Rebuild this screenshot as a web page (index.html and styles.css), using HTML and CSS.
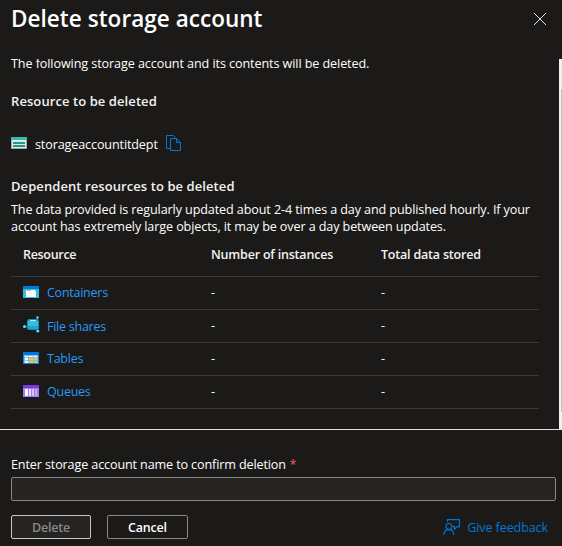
FILE: index.html
```
<!DOCTYPE html>
<html lang="en">
<head>
<meta charset="utf-8">
<title>Delete storage account</title>
<link rel="stylesheet" href="styles.css">
</head>
<body>
<div class="panel">
  <header class="header">
    <h1>Delete storage account</h1>
    <svg class="close" width="14" height="14" viewBox="0 0 14 14"><path d="M1 1l12 12M13 1L1 13" stroke="#e4e4e4" stroke-width="1" fill="none"/></svg>
  </header>
  <main class="content">
    <div class="body">
      <p class="intro">The following storage account and its contents will be deleted.</p>
      <h2 class="h-resource">Resource to be deleted</h2>
      <div class="account">
        <svg class="storage" width="16" height="12" viewBox="0 0 16 12"><path fill="#e6e6e6" d="M0 0h16v12H0z"/><path fill="#a5a5a5" d="M0 3h1v8h14V3h1v9H0z"/><path fill="#32bea6" d="M0 0h16v3H0z"/><path fill="#1e9b91" d="M2 5h12v2H2zM2 8h12v2H2z"/></svg>
        <span class="account-name">storageaccountitdept</span>
        <svg class="copy" width="16" height="17" viewBox="0 0 16 17" fill="none" stroke="#0078d4"><path d="M4.500 13.500h-4V.500h7l2 2M4.500 3.500h6l4 4v8h-10zM10.500 3.500v4h4"/></svg>
      </div>
      <h2 class="h-dependent">Dependent resources to be deleted</h2>
      <p class="note">The data provided is regularly updated about 2-4 times a day and published hourly. If your<br>account has extremely large objects, it may be over a day between updates.</p>
      <div class="table">
        <div class="row head"><span class="th-resource">Resource</span><span>Number of instances</span><span>Total data stored</span></div>
        <div class="row"><span class="res"><svg class="icon" width="16" height="12" viewBox="0 0 16 12"><path fill="#32bedd" d="M0 0h16v12H0z"/><path fill="#0078d4" d="M0 0h16v3H0z"/><path fill="#fff" d="M4 4h8v1h1v6H3V5z"/><path fill="#f6a45b" d="M4 4h4v1H4z"/></svg><a>Containers</a></span><span>-</span><span>-</span></div>
        <div class="row"><span class="res files"><svg class="share" width="17" height="17" viewBox="0 0 17 17"><path d="M14.500 1v4M1 10.500h4M14.500 11v4" stroke="#198ab3"/><rect x="4" y="3" width="12" height="11" rx="2" fill="#198ab3"/><path fill="#32bedd" d="M5 5h10v6H5z"/><path fill="#20a3c9" d="M5 10h10v3H5z"/><path fill="#b9eefa" d="M7 4h6v1H7z"/><g fill="#50e6ff"><circle cx="14.500" cy="1.500" r="1.200"/><circle cx="1.500" cy="10.500" r="1.500"/><circle cx="14.800" cy="15.200" r="1.400"/></g></svg><a>File shares</a></span><span>-</span><span>-</span></div>
        <div class="row"><span class="res"><svg class="icon" width="16" height="12" viewBox="0 0 16 12"><path fill="#1586d3" d="M0 0h16v12H0z"/><path fill="#0078d4" d="M0 0h16v3H0z"/><path fill="#83b9f9" d="M1 3h14v8H1z"/><path fill="#fff" d="M2 4h3v1H2zM6 4h4v1H6zM11 4h3v1h-3zM2 6h3v2H2zM2 9h3v2H2z"/><path fill="#f2cb1d" d="M6 6h4v2H6zM11 6h3v2h-3zM6 9h4v2H6zM11 9h3v2h-3z"/></svg><a>Tables</a></span><span>-</span><span>-</span></div>
        <div class="row"><span class="res"><svg class="icon" width="16" height="12" viewBox="0 0 16 12"><path fill="#a67af4" d="M0 0h16v12H0z"/><path fill="#773adc" d="M0 0h16v3H0z"/><path fill="#fff" d="M2 4h3v7H2z"/><path fill="#e9dcfd" d="M6 4h2v7H6z"/><path fill="#d7c1f9" d="M9 4h2v7H9z"/><path fill="#c5a7f5" d="M12 4h2v7h-2z"/></svg><a>Queues</a></span><span>-</span><span>-</span></div>
      </div>
    </div>
    <div class="scrollbar"><div class="thumb"></div></div>
  </main>
  <footer class="footer">
    <label for="confirm"><span>Enter storage account name to confirm deletion</span><span class="required">*</span></label>
    <input id="confirm" type="text">
    <div class="actions">
      <button class="delete" disabled>Delete</button>
      <button class="cancel">Cancel</button>
      <a class="feedback"><svg width="17" height="17" viewBox="0 0 17 17" fill="none" stroke="#0078d4" stroke-width="1.100"><path d="M4.500 3V.600h12v7h-2.300l-2.700 2.700V7.600H10"/><circle cx="6" cy="7.500" r="3"/><path d="M.600 16c.300-3.500 2.400-5.400 5.200-5.400s4.800 2 5.100 5.400"/></svg><span>Give feedback</span></a>
    </div>
  </footer>
</div>
</body>
</html>
```
FILE: styles.css
```
* { box-sizing: border-box; }
body {
  margin: 0;
  background: #1b1a19;
  color: #fff;
  font: 12.6px/17px "Open Sans", "Noto Sans", sans-serif;
  letter-spacing: -0.13px;
  white-space: nowrap;
}
h1, h2, p { margin: 0; }
.panel { width: 562px; height: 546px; display: flex; flex-direction: column; overflow: hidden; }
.header { height: 59px; flex: none; display: flex; justify-content: space-between; padding: 4px 15px 0 11px; }
h1 { font-size: 22.500px; line-height: 30px; font-weight: 600; letter-spacing: 0.04px; }
.close { margin-top: 8px; }
.content { height: 370px; flex: none; display: flex; justify-content: space-between; overflow: hidden; }
.body { width: 539px; padding-left: 11px; margin-top: -4px; }
.intro { letter-spacing: -0.09px; }
h2 { font-size: 13px; line-height: 17px; font-weight: 600; color: #f3f2f1; letter-spacing: 0.08px; }
.h-resource { margin-top: 21px; }
.account { display: flex; align-items: center; height: 20px; margin-top: 24px; }
.storage { position: relative; top: -1px; }
.account-name { margin-left: 8px; }
.copy { margin: -1px 0 0 8px; }
.h-dependent { margin-top: 24px; }
.note { margin-top: 6px; letter-spacing: -0.11px; }
.table { font-size: 12.5px; letter-spacing: -0.2px; }
.row { display: grid; grid-template-columns: 188px 170px 1fr; align-items: center; height: 33px; padding: 0 0 1px 12px; border-bottom: 1px solid #3b3a39; }
.head { height: 42px; padding-bottom: 2px; font-weight: 600; color: #f3f2f1; }
.th-resource { letter-spacing: -0.3px; }
.res { display: flex; align-items: center; height: 17px; }
.res a { margin-left: 8px; color: #2899f5; letter-spacing: -0.25px; }
.icon { margin-top: -1px; }
.files a { padding-top: 2px; }
.share { margin: -2px -1px 0 0; }
.scrollbar { width: 3px; padding: 30px 0 17px 2px; background: #f1f1f1; }
.thumb { height: 100%; background: #c1c1c1; }
.footer { flex: 1; border-top: 1px solid #e1dfdd; padding: 26px 6px 0 11px; }
label { display: flex; height: 21px; line-height: 17px; }
.required { color: #f1605f; margin-left: 4px; font-size: 12px; }
input { display: block; width: 100%; height: 24px; border: 1px solid #8a8886; border-radius: 2px; background: #252423; color: #fff; }
.actions { display: flex; margin-top: 14px; }
button { height: 24px; padding: 1px 0 0; border-radius: 2px; font: 600 12.5px/17px "Open Sans", "Noto Sans", sans-serif; letter-spacing: -0.2px; }
.delete { width: 80px; color: #8a8886; background: #252423; border: 1px solid #c8c6c4; }
.cancel { width: 81px; margin-left: 16px; color: #fff; background: #1b1a19; border: 1px solid #8a8886; }
.feedback { display: flex; align-items: center; margin-left: auto; padding-right: 8px; color: #0078d4; }
.feedback span { margin-left: 7px; }
```
